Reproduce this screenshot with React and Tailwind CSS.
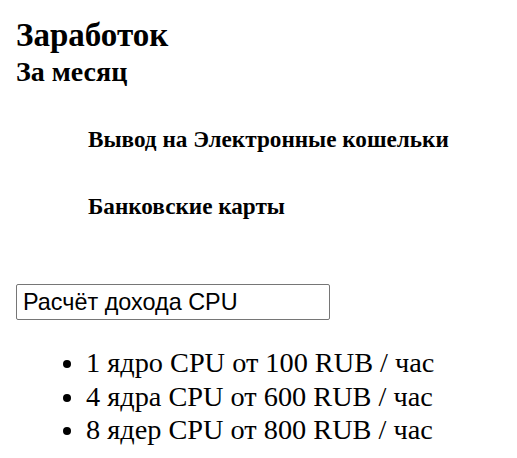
export default function App() {
  return (
    <div className="min-h-[458px] bg-white pl-4 text-black font-['Liberation_Serif',serif]">
      <h1 className="pt-[16px] text-[33px] font-bold leading-[38px]">Заработок</h1>
      <h2 className="text-[28px] font-bold leading-[36px]">За месяц</h2>

      <div className="mt-[29px] pl-[72px] text-[23.2px] font-bold">
        <p className="leading-[40px]">Вывод на Электронные кошельки</p>
        <p className="mt-[27px] leading-[40px]">Банковские карты</p>
      </div>

      <input
        type="text"
        defaultValue="Расчёт дохода CPU"
        className="mt-[58px] block h-[36px] w-[314px] rounded-[2px] border border-[#767676] px-[6px] text-[23.4px] font-['Liberation_Sans',Arial,sans-serif] outline-none"
      />

      <ul className="mt-[26px] list-disc pl-[70px] text-[28.3px] leading-[33.5px]">
        <li>1 ядро CPU от 100 RUB / час</li>
        <li>4 ядра CPU от 600 RUB / час</li>
        <li>8 ядер CPU от 800 RUB / час</li>
      </ul>
    </div>
  );
}
